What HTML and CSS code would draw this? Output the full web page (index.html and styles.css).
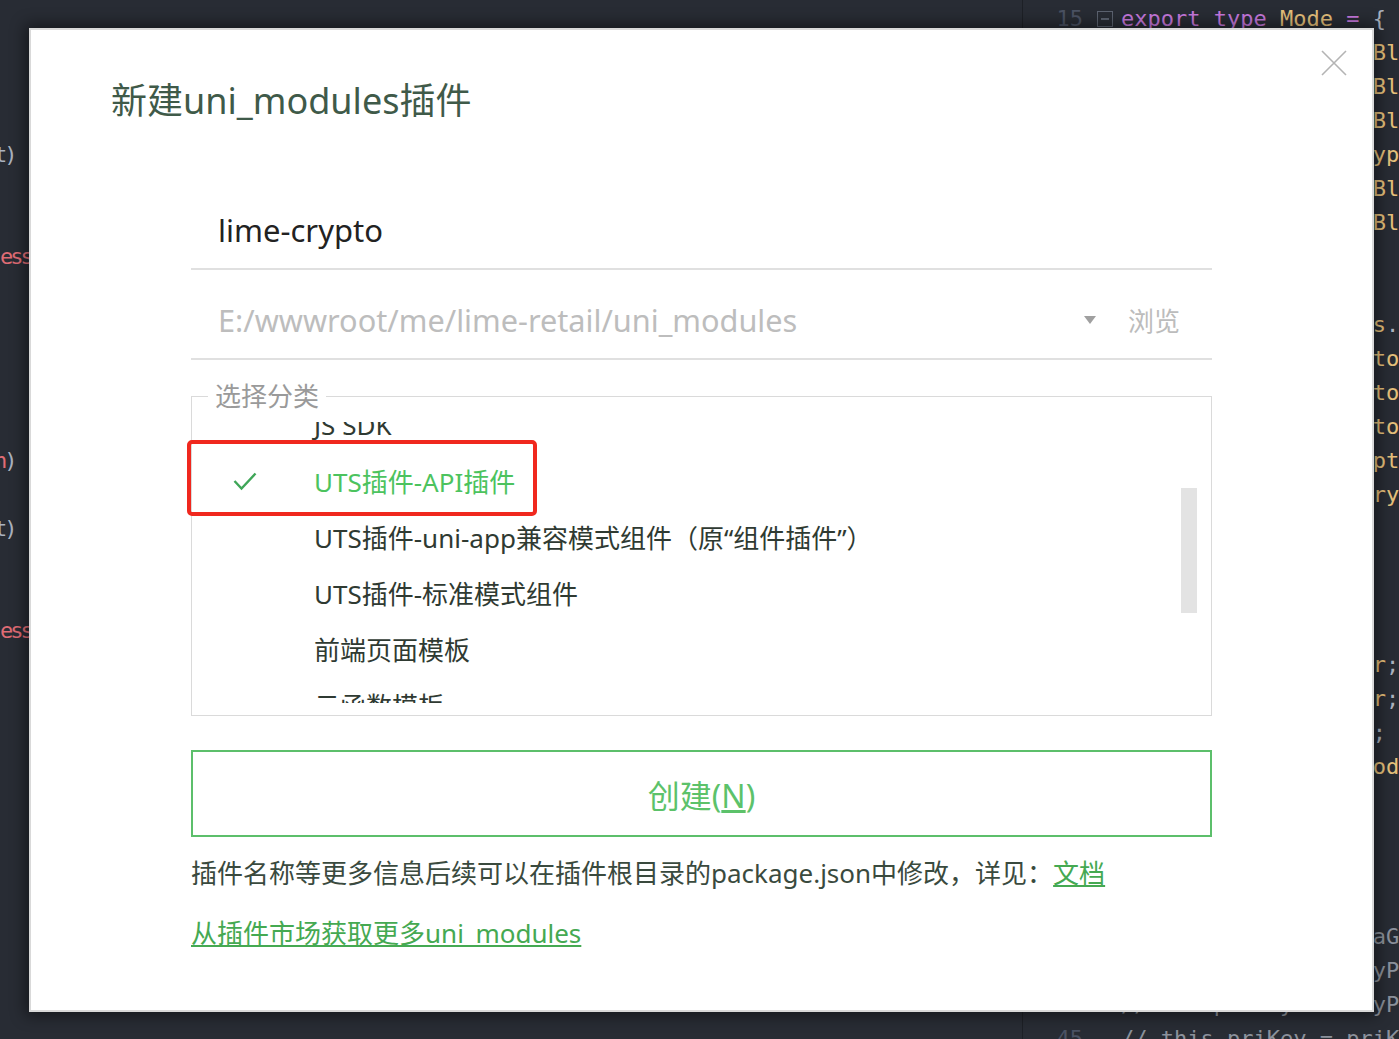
FILE: index.html
```html
<!DOCTYPE html>
<html lang="zh-CN">
<head>
    <meta charset="UTF-8">
    <meta name="viewport" content="width=device-width, initial-scale=1.0">
    <title>新建uni_modules插件</title>
    <link rel="stylesheet" href="styles.css">
</head>
<body>
    <div class="editor">
        <div class="pane-left">
            <div class="line"></div>
            <div class="line"></div>
            <div class="line"></div>
            <div class="line"></div>
            <div class="line cut">t)</div>
            <div class="line"></div>
            <div class="line"></div>
            <div class="line"><span class="red">ess</span></div>
            <div class="line"></div>
            <div class="line"></div>
            <div class="line"></div>
            <div class="line"></div>
            <div class="line"></div>
            <div class="line cut"><span class="red">n</span>)</div>
            <div class="line"></div>
            <div class="line cut">t)</div>
            <div class="line"></div>
            <div class="line"></div>
            <div class="line"><span class="red">ess</span></div>
        </div>
        <div class="pane-right">
            <div class="row"><span class="num">15</span><span class="fold"><i class="fold-box"></i></span><span class="code"><span class="kw">export type</span> <span class="ty">Mode</span> <span class="kw">=</span> {</span></div>
            <div class="row"><span class="num">16</span><span class="fold"></span><span class="code">                   <span class="ty">BlockMode</span></span></div>
            <div class="row"><span class="num">17</span><span class="fold"></span><span class="code">                   <span class="ty">BlockMode</span></span></div>
            <div class="row"><span class="num">18</span><span class="fold"></span><span class="code">                   <span class="ty">BlockMode</span></span></div>
            <div class="row"><span class="num">19</span><span class="fold"></span><span class="code">                   <span class="ty">ypeMode</span></span></div>
            <div class="row"><span class="num">20</span><span class="fold"></span><span class="code">                   <span class="ty">BlockMode</span></span></div>
            <div class="row"><span class="num">21</span><span class="fold"></span><span class="code">                   <span class="ty">BlockMode</span></span></div>
            <div class="row"><span class="num">22</span><span class="fold"></span><span class="code"></span></div>
            <div class="row"><span class="num">23</span><span class="fold"></span><span class="code"></span></div>
            <div class="row"><span class="num">24</span><span class="fold"></span><span class="code">                   <span class="ty">s</span>.</span></div>
            <div class="row"><span class="num">25</span><span class="fold"></span><span class="code">                   <span class="ty">toString</span></span></div>
            <div class="row"><span class="num">26</span><span class="fold"></span><span class="code">                   <span class="ty">toString</span></span></div>
            <div class="row"><span class="num">27</span><span class="fold"></span><span class="code">                   <span class="ty">toString</span></span></div>
            <div class="row"><span class="num">28</span><span class="fold"></span><span class="code">                   <span class="ty">pt</span></span></div>
            <div class="row"><span class="num">29</span><span class="fold"></span><span class="code">                   <span class="ty">ry</span></span></div>
            <div class="row"><span class="num">30</span><span class="fold"></span><span class="code"></span></div>
            <div class="row"><span class="num">31</span><span class="fold"></span><span class="code"></span></div>
            <div class="row"><span class="num">32</span><span class="fold"></span><span class="code"></span></div>
            <div class="row"><span class="num">33</span><span class="fold"></span><span class="code"></span></div>
            <div class="row"><span class="num">34</span><span class="fold"></span><span class="code">                   <span class="ty">r</span>;</span></div>
            <div class="row"><span class="num">35</span><span class="fold"></span><span class="code">                   <span class="ty">r</span>;</span></div>
            <div class="row"><span class="num">36</span><span class="fold"></span><span class="code">                   ;</span></div>
            <div class="row"><span class="num">37</span><span class="fold"></span><span class="code">                   <span class="ty">ode</span></span></div>
            <div class="row"><span class="num">38</span><span class="fold"></span><span class="code"></span></div>
            <div class="row"><span class="num">39</span><span class="fold"></span><span class="code"></span></div>
            <div class="row"><span class="num">40</span><span class="fold"></span><span class="code"></span></div>
            <div class="row"><span class="num">41</span><span class="fold"></span><span class="code"></span></div>
            <div class="row"><span class="num">42</span><span class="fold"></span><span class="code"><span class="cm">                   aGen</span></span></div>
            <div class="row"><span class="num">43</span><span class="fold"></span><span class="code"><span class="cm">                   yPair</span></span></div>
            <div class="row"><span class="num">44</span><span class="fold"></span><span class="code"><span class="cm">// let priKeyJ = keyPair</span></span></div>
            <div class="row"><span class="num">45</span><span class="fold"></span><span class="code"><span class="cm">// this.priKey = priKey</span></span></div>
        </div>
    </div>

    <div class="dialog">
        <button class="close-btn" title="关闭">
            <svg width="26" height="26" viewBox="0 0 26 26"><path d="M1 1 L25 25 M25 1 L1 25" stroke="#b4b4b4" stroke-width="1.6" fill="none"/></svg>
        </button>
        <h1 class="title">新建uni_modules插件</h1>
        <div class="form">
            <div class="field">
                <span class="name-input">lime-crypto</span>
            </div>
            <div class="field">
                <span class="path-input">E:/wwwroot/me/lime-retail/uni_modules</span>
                <span class="arrow"></span>
                <span class="browse">浏览</span>
            </div>
            <fieldset class="category">
                <legend>选择分类</legend>
                <div class="list-wrap">
                    <div class="list">
                        <div class="list-inner">
                            <div class="item"><span class="check"></span>JS SDK</div>
                            <div class="item selected"><span class="check"><svg width="24" height="20" viewBox="0 0 24 20"><path d="M1.5 10 L8.5 17.5 L22.5 2.5" stroke="#3fa658" stroke-width="2.4" fill="none"/></svg></span>UTS插件-API插件</div>
                            <div class="item"><span class="check"></span>UTS插件-uni-app兼容模式组件（原“组件插件”）</div>
                            <div class="item"><span class="check"></span>UTS插件-标准模式组件</div>
                            <div class="item"><span class="check"></span>前端页面模板</div>
                            <div class="item"><span class="check"></span>云函数模板</div>
                            <div class="item"><span class="check"></span>uniCloud项目模板</div>
                        </div>
                    </div>
                    <div class="thumb"></div>
                    <div class="mark"></div>
                </div>
            </fieldset>
            <button class="create-btn">创建(<u>N</u>)</button>
            <p class="info">插件名称等更多信息后续可以在插件根目录的package.json中修改，详见：<a href="#">文档</a></p>
            <p class="market"><a href="#">从插件市场获取更多uni_modules</a></p>
        </div>
    </div>
</body>
</html>
```

FILE: styles.css
```css
body {
    margin: 0;
    padding: 0;
    background-color: #282c34;
    overflow: hidden;
    height: 1039px;
}
.editor {
    display: flex;
    height: 100%;
    font-family: "DejaVu Sans Mono", monospace;
    font-size: 22px;
    color: #abb2bf;
}
.pane-left {
    width: 1022px;
    padding-top: 2px;
    border-right: 1px solid #1d2026;
    overflow: hidden;
    flex-shrink: 0;
}
.pane-left .line {
    height: 34px;
    line-height: 34px;
    letter-spacing: -3px;
    white-space: pre;
}
.pane-left .cut {
    text-indent: -6px;
}
.red {
    color: #e06c75;
}
.pane-right {
    flex: 1;
    padding-top: 2px;
    overflow: hidden;
}
.row {
    display: flex;
    height: 34px;
    line-height: 34px;
    white-space: pre;
}
.num {
    width: 60px;
    text-align: right;
    color: #4b5263;
    flex-shrink: 0;
}
.fold {
    width: 38px;
    flex-shrink: 0;
    display: flex;
    align-items: center;
}
.fold-box {
    display: block;
    width: 14px;
    height: 14px;
    margin-left: 14px;
    border: 1.5px solid #5c6370;
    position: relative;
}
.fold-box::after {
    content: "";
    position: absolute;
    left: 3px;
    right: 3px;
    top: 6px;
    height: 1.5px;
    background: #5c6370;
}
.kw {
    color: #c678dd;
}
.ty {
    color: #e5c07b;
}
.cm {
    color: #8b919b;
}

/* dialog */
.dialog {
    position: absolute;
    left: 29px;
    top: 28px;
    width: 1345px;
    height: 984px;
    box-sizing: border-box;
    background: #ffffff;
    border: 2px solid #d9d9d9;
    box-shadow: 0 0 14px 4px rgba(0, 0, 0, 0.45);
    font-family: "Noto Sans", "Noto Sans CJK SC", sans-serif;
}
.close-btn {
    position: absolute;
    top: 20px;
    right: 25px;
    width: 26px;
    height: 26px;
    padding: 0;
    border: none;
    background: none;
    cursor: pointer;
}
.close-btn svg {
    display: block;
}
.title {
    margin: 0;
    padding: 47px 0 0 80px;
    font-size: 36px;
    line-height: 48px;
    font-weight: normal;
    color: #3f5a49;
}
.form {
    padding: 55px 160px 0;
}
.field {
    display: flex;
    align-items: center;
    padding: 12px 32px 0 27px;
    box-sizing: border-box;
    height: 90px;
    border-bottom: 2px solid #e0e0e0;
}
.name-input {
    font-size: 31px;
    color: #222222;
}
.path-input {
    flex: 1;
    font-size: 30.7px;
    color: #bdbdbd;
}
.arrow {
    width: 0;
    height: 0;
    border-left: 6px solid transparent;
    border-right: 6px solid transparent;
    border-top: 8px solid #a0a0a0;
    margin-right: 32px;
}
.browse {
    font-size: 26px;
    color: #bcbcbc;
}
.category {
    margin: 19px 0 0;
    padding: 9px 0 12px;
    border: 1px solid #dadada;
}
.category legend {
    margin-left: 16px;
    padding: 0 7px;
    font-size: 26px;
    line-height: 34px;
    color: #9a9a9a;
}
.list-wrap {
    position: relative;
}
.list {
    height: 281px;
    overflow: hidden;
}
.list-inner {
    margin-top: -25px;
}
.item {
    display: flex;
    align-items: center;
    height: 56px;
    font-size: 26px;
    color: #2f3a32;
    white-space: nowrap;
}
.item .check {
    width: 122px;
    padding-left: 41px;
    box-sizing: border-box;
    flex-shrink: 0;
    display: flex;
    align-items: center;
}
.item .check svg {
    display: block;
}
.item.selected {
    color: #4cc35e;
}
.thumb {
    position: absolute;
    left: 989px;
    top: 66px;
    width: 16px;
    height: 125px;
    background: #e3e3e3;
}
.mark {
    position: absolute;
    left: -5px;
    top: 18px;
    width: 350px;
    height: 76px;
    box-sizing: border-box;
    border: 4px solid #f0281e;
    border-radius: 5px;
}
.create-btn {
    display: block;
    width: 100%;
    height: 87px;
    margin-top: 34px;
    border: 2px solid #5cbf6b;
    background: #ffffff;
    font-family: inherit;
    font-size: 32px;
    color: #5cc26a;
    cursor: pointer;
}
.info {
    margin: 18px 0 0;
    font-size: 26px;
    line-height: 36px;
    color: #3a4a3e;
}
.market {
    margin: 24px 0 0;
    font-size: 26px;
    line-height: 36px;
}
.info a,
.market a {
    color: #45a952;
}
```
